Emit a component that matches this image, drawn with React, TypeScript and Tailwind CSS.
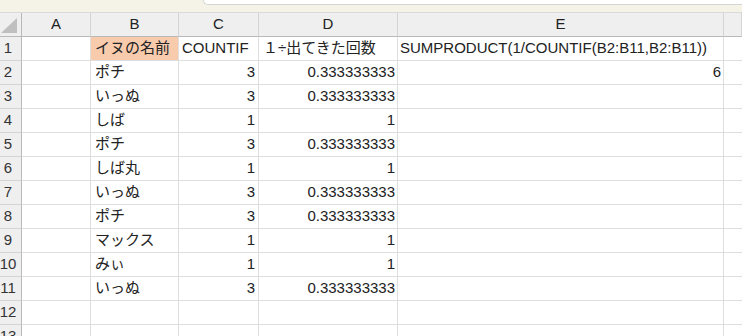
import React from 'react';

type Row = { b?: string; c?: string; d?: string; e?: string };

const rows: Row[] = [
  { b: 'イヌの名前', c: 'COUNTIF', d: '１÷出てきた回数', e: 'SUMPRODUCT(1/COUNTIF(B2:B11,B2:B11))' },
  { b: 'ポチ', c: '3', d: '0.333333333', e: '6' },
  { b: 'いっぬ', c: '3', d: '0.333333333' },
  { b: 'しば', c: '1', d: '1' },
  { b: 'ポチ', c: '3', d: '0.333333333' },
  { b: 'しば丸', c: '1', d: '1' },
  { b: 'いっぬ', c: '3', d: '0.333333333' },
  { b: 'ポチ', c: '3', d: '0.333333333' },
  { b: 'マックス', c: '1', d: '1' },
  { b: 'みぃ', c: '1', d: '1' },
  { b: 'いっぬ', c: '3', d: '0.333333333' },
  {},
  {},
];

const cols = ['A', 'B', 'C', 'D', 'E', ''];

export default function App() {
  return (
    <div className="w-[742px] h-[336px] overflow-hidden bg-white text-[#222] font-['Liberation_Sans','Noto_Sans_CJK_JP',sans-serif] text-[15px]">
      {/* formula bar edge */}
      <div className="h-[13px] flex bg-[#f5f2e7] border-b border-[#d9d9d9]">
        <div className="w-[203px] shrink-0" />
        <div className="flex-1 h-[5px] bg-white border-l border-b border-[#d6d6d6] rounded-bl-[5px]" />
      </div>

      <div className="grid grid-cols-[22px_69px_88px_80px_139px_326px_1fr] auto-rows-[24px]">
        {/* corner */}
        <div className="bg-[#efefef] border-r border-b border-[#b9b9b9] flex items-end justify-end pr-[4px] pb-[3px]">
          <svg width="16" height="15" viewBox="0 0 16 15">
            <polygon points="16,0 16,15 0,15" fill="#bfbfbf" />
          </svg>
        </div>
        {cols.map((c, i) => (
          <div
            key={i}
            className="bg-[#efefef] border-r border-b border-r-[#d4d4d4] border-b-[#b9b9b9] flex items-center justify-center"
          >
            {c}
          </div>
        ))}

        {rows.map((r, i) => (
          <React.Fragment key={i}>
            <div className="bg-[#efefef] border-r border-b border-r-[#b9b9b9] border-b-[#d4d4d4] flex items-center justify-center pr-[5px] text-[#333]">
              {i + 1}
            </div>
            <div className="border-r border-b border-[#dedede]" />
            <div
              className={
                'border-r border-b border-[#dedede] flex items-center pl-[4px] pb-[1px] whitespace-nowrap ' +
                (i === 0 ? 'bg-[#f8cbad]' : '')
              }
            >
              {r.b}
            </div>
            <div
              className={
                'border-r border-b border-[#dedede] flex items-center pb-[1px] whitespace-nowrap ' +
                (i === 0 ? 'justify-start pl-[3px]' : 'justify-end pr-[3px]')
              }
            >
              {r.c}
            </div>
            <div
              className={
                'border-r border-b border-[#dedede] flex items-center pb-[1px] whitespace-nowrap ' +
                (i === 0 ? 'justify-start pl-[4px]' : 'justify-end pr-[2px]')
              }
            >
              {r.d}
            </div>
            <div
              className={
                'border-r border-b border-[#dedede] flex items-center pb-[1px] whitespace-nowrap ' +
                (i === 0 ? 'justify-start pl-[2px]' : 'justify-end pr-[2px]')
              }
            >
              {r.e}
            </div>
            <div className="border-b border-[#dedede]" />
          </React.Fragment>
        ))}
      </div>
    </div>
  );
}
